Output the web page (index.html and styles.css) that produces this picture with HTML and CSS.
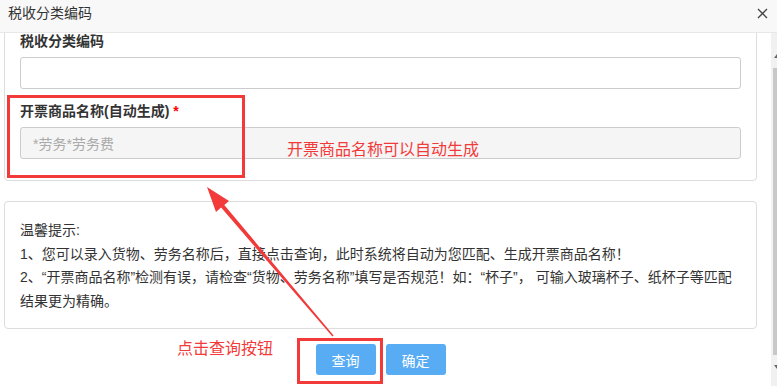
FILE: index.html
```html
<!DOCTYPE html>
<html lang="zh-CN">
<head>
<meta charset="utf-8">
<title>税收分类编码</title>
<link rel="stylesheet" href="styles.css">
</head>
<body>
<div class="dialog">
  <header class="dlg-head">
    <span class="dlg-title">税收分类编码</span>
    <span class="dlg-close" aria-label="关闭">
      <svg width="11" height="11" viewBox="0 0 11 11"><path d="M1 1 L10 10 M10 1 L1 10" stroke="#444" stroke-width="1.3" fill="none"/></svg>
    </span>
  </header>
  <div class="dlg-body">
    <div class="dlg-scroll">
      <section class="card card-form">
        <div class="field">
          <label class="field-label">税收分类编码</label>
          <div class="input"></div>
        </div>
        <div class="field field-gen">
          <label class="field-label">开票商品名称(自动生成) <span class="req">*</span></label>
          <div class="input input-readonly"><span class="placeholder">*劳务*劳务费</span></div>
        </div>
      </section>
      <section class="card card-note">
        <p>温馨提示:</p>
        <p>1、您可以录入货物、劳务名称后，直接点击查询，此时系统将自动为您匹配、生成开票商品名称！</p>
        <p>2、“开票商品名称”检测有误，请检查“货物、劳务名称”填写是否规范！如：“杯子”， 可输入玻璃杯子、纸杯子等匹配<br>结果更为精确。</p>
      </section>
      <div class="actions">
        <button class="btn">查询</button>
        <button class="btn">确定</button>
      </div>
    </div>
    <div class="scrollbar">
      <span class="sb-arrow sb-up"></span>
      <div class="sb-thumb"></div>
      <span class="sb-arrow sb-down"></span>
    </div>
  </div>

  <div class="mark mark-field"></div>
  <div class="mark mark-btn"></div>
  <div class="note-red note-gen">开票商品名称可以自动生成</div>
  <div class="note-red note-btn">点击查询按钮</div>
  <svg class="arrow" width="777" height="386" viewBox="0 0 777 386">
    <polygon points="207,187 229,201 224.3,205 333.6,335.5 332.4,336.5 221.1,207.6 216,212" fill="#f23a3a"/>
  </svg>
</div>
</body>
</html>
```
FILE: styles.css
```css
* { box-sizing: border-box; }
html, body { margin: 0; padding: 0; background: #fff; }
body {
  font-family: "Liberation Sans", "Noto Sans CJK SC", sans-serif;
  color: #333;
}
.dialog {
  position: relative;
  width: 777px;
  height: 386px;
  display: flex;
  flex-direction: column;
  overflow: hidden;
  background: #fff;
}
.dlg-head {
  height: 33px;
  flex: none;
  background: #f8f8f8;
  border-bottom: 1px solid #e8e8e8;
  display: flex;
  align-items: flex-start;
  justify-content: space-between;
  padding: 0 9px 0 8px;
}
.dlg-title {
  font-size: 14px;
  line-height: 26px;
  color: #333;
}
.dlg-close {
  margin-top: 8px;
  display: flex;
}
.dlg-body {
  flex: 1;
  display: flex;
  min-height: 0;
}
.dlg-scroll {
  flex: 1;
  overflow: hidden;
}
.card {
  margin: 0 14px 0 4px;
  border: 1px solid #ddd;
  border-radius: 4px;
  background: #fff;
}
.card-form {
  margin-top: -18px;
  padding: 15px 15px 21px;
}
.field-label {
  display: block;
  font-size: 14px;
  font-weight: bold;
  line-height: 20px;
  height: 20px;
  color: #333;
}
.req { color: #f00; }
.input {
  margin-top: 6px;
  height: 32px;
  border: 1px solid #ccc;
  border-radius: 3px;
  background: #fff;
}
.field-gen { margin-top: 12px; }
.input-readonly {
  background: #f5f5f5;
  padding-left: 12px;
  display: flex;
  align-items: center;
}
.placeholder {
  font-size: 14px;
  color: #aaa;
}
.card-note {
  margin-top: 20px;
  padding: 17px 15px 15px;
  font-size: 14px;
  line-height: 23.5px;
}
.card-note p { margin: 0; }
.actions {
  margin: 15px 14px 0 4px;
  display: flex;
  justify-content: center;
  gap: 10px;
}
.btn {
  width: 60px;
  height: 31px;
  border: none;
  border-radius: 3px;
  background: #58acf4;
  color: #fff;
  font-family: "Liberation Sans", "Noto Sans CJK SC", sans-serif;
  font-size: 14px;
  padding: 0;
}
.scrollbar {
  width: 6px;
  flex: none;
  background: #f1f1f1;
  display: flex;
  flex-direction: column;
  align-items: flex-end;
  padding-top: 21px;
}
.sb-arrow {
  width: 0;
  height: 0;
  border-left: 3px solid transparent;
}
.sb-up { border-bottom: 4px solid #666; }
.sb-down { border-top: 4px solid #666; margin-top: 10px; }
.sb-thumb {
  width: 4px;
  height: 287px;
  margin-top: 10px;
  background: #c8c8c8;
}
.mark {
  position: absolute;
  border: 3px solid #f33a3a;
  pointer-events: none;
}
.mark-field { left: 7px; top: 95px; width: 238px; height: 83px; }
.mark-btn { left: 297px; top: 338px; width: 86px; height: 46px; }
.note-red {
  position: absolute;
  color: #f33a3a;
  font-size: 16px;
  line-height: 20px;
  white-space: nowrap;
}
.note-gen { left: 287px; top: 140px; }
.note-btn { left: 177px; top: 339px; }
.arrow {
  position: absolute;
  left: 0;
  top: 0;
  pointer-events: none;
}
```
